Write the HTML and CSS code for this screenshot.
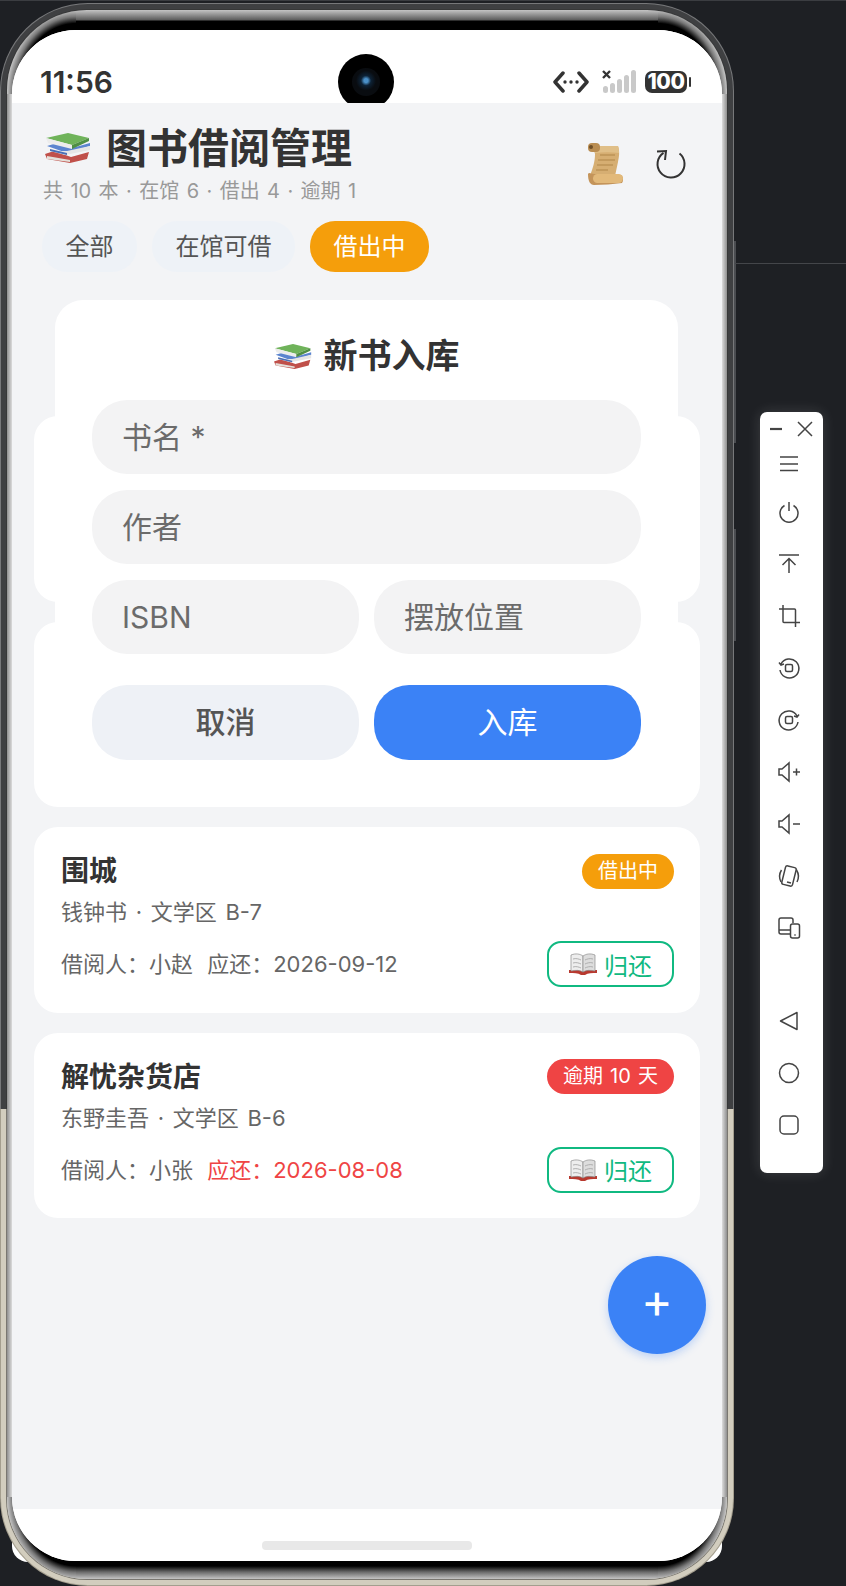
FILE: index.html
```html
<!DOCTYPE html>
<html lang="zh-CN">
<head>
    <meta charset="UTF-8">
    <meta name="viewport" content="width=device-width, initial-scale=1.0">
    <title>图书借阅管理</title>
    <link rel="stylesheet" href="styles.css">
</head>
<body>
    <svg class="defs" width="0" height="0">
        <symbol id="books" viewBox="0 0 46 30">
            <polygon points="0,21 9,18 26,24 44,19 42,26 25,30 2,26" fill="#c0504a"/>
            <polygon points="2,23 25,27 25,29 2,26" fill="#e4e0da"/>
            <polygon points="2,13 12,10 27,15 45,10 45,13 22,20" fill="#5b84cf"/>
            <polygon points="22,18 45,13 45,17 20,22 5,18" fill="#e6e6e6"/>
            <polygon points="5,16 22,20 22,22 5,18" fill="#4a6fb5"/>
            <polygon points="1,5 23,0 44,5 27,12" fill="#6fb35a"/>
            <polygon points="1,5 27,12 27,16 3,10" fill="#ececec"/>
            <polygon points="27,12 44,5 44,8 27,16" fill="#4f8f44"/>
        </symbol>
        <symbol id="open-book" viewBox="0 0 28 22">
            <path d="M0 17h28v3c-5 0-9 0-12 2h-4c-3-2-7-2-12-2z" fill="#b8392f"/>
            <path d="M2 2c5-2 9-1 12 1v16c-3-2-7-2-12-1z" fill="#eeeeee" stroke="#8a8a8a" stroke-width=".7"/>
            <path d="M26 2c-5-2-9-1-12 1v16c3-2 7-2 12-1z" fill="#dddddd" stroke="#8a8a8a" stroke-width=".7"/>
            <path d="M4 6c3-1 6 0 8 1M4 10c3-1 6 0 8 1M4 14c3-1 6 0 8 1M24 6c-3-1-6 0-8 1M24 10c-3-1-6 0-8 1M24 14c-3-1-6 0-8 1" fill="none" stroke="#a8a8a8" stroke-width=".9"/>
        </symbol>
    </svg>

    <div class="phone">
        <div class="phone-band">
            <div class="bezel">
                <div class="screen">
                    <div class="status-bar">
                        <span class="time">11:56</span>
                        <div class="camera"><span class="lens"></span></div>
                        <div class="status-icons">
                            <svg class="net-icon" width="36" height="22" viewBox="0 0 36 22">
                                <path d="M10 2 2 11l8 9M26 2l8 9-8 9" fill="none" stroke="#333" stroke-width="3.500" stroke-linecap="round" stroke-linejoin="round"/>
                                <circle cx="12" cy="11" r="1.700" fill="#333"/>
                                <circle cx="18" cy="11" r="1.700" fill="#333"/>
                                <circle cx="24" cy="11" r="1.700" fill="#333"/>
                            </svg>
                            <svg class="signal-icon" width="34" height="24" viewBox="0 0 34 24">
                                <path d="M1 2l7 7M8 2 1 9" stroke="#333" stroke-width="2.400"/>
                                <rect x="1" y="17" width="5" height="7" rx="2.500" fill="#c9c9c9"/>
                                <rect x="8" y="14" width="5" height="10" rx="2.500" fill="#c9c9c9"/>
                                <rect x="15" y="10" width="5" height="14" rx="2.500" fill="#c9c9c9"/>
                                <rect x="22" y="6" width="5" height="18" rx="2.500" fill="#c9c9c9"/>
                                <rect x="29" y="1" width="5" height="23" rx="2.500" fill="#c9c9c9"/>
                            </svg>
                            <span class="battery">100</span>
                        </div>
                    </div>

                    <div class="app">
                        <div class="header">
                            <div>
                                <h1 class="title">
                                    <svg class="title-emoji"><use href="#books"/></svg>
                                    图书借阅管理
                                </h1>
                                <div class="subtitle">共 10 本 · 在馆 6 · 借出 4 · 逾期 1</div>
                            </div>
                            <div class="header-actions">
                                <svg width="36" height="43" viewBox="0 0 36 43">
                                    <path d="M6 3h25c2 6 1 11 0 16l-3 14H3c3-9 5-14 5-22z" fill="#d6ae72"/>
                                    <path d="M6 3h25c1 3 1 5 1 7-8-1-16-1-24 0z" fill="#e0bf88"/>
                                    <path d="M13 12h15M11 17h17M10 22h16M9 27h12" stroke="#b08548" stroke-width="1.200"/>
                                    <rect x="1" y="0" width="12" height="9" rx="4" fill="#b98d52"/>
                                    <circle cx="4" cy="4" r="2" fill="#6f4f28"/>
                                    <path d="M1 31c0 7 2 11 6 11 9 0 19-1 28-2 2-3 1-7-1-8-10-1-19-1-27-1-3 0-5-2-6 0z" fill="#c4945a"/>
                                    <rect x="6" y="31" width="30" height="9" rx="4.500" fill="#e2b97a"/>
                                </svg>
                                <svg width="32" height="32" viewBox="0 0 32 32">
                                    <path d="M24.500 4.500A13.500 13.500 0 1 1 8.500 3.800" fill="none" stroke="#333" stroke-width="2"/>
                                    <path d="M2 2.500 11 2l-1 9" fill="none" stroke="#333" stroke-width="2"/>
                                </svg>
                            </div>
                        </div>

                        <div class="chips">
                            <span class="chip">全部</span>
                            <span class="chip">在馆可借</span>
                            <span class="chip chip-active">借出中</span>
                        </div>

                        <div class="book-list">
                            <div class="book-card"></div>
                            <div class="book-card"></div>
                            <div class="book-card">
                                <div class="book-top">
                                    <span class="book-name">围城</span>
                                    <span class="badge badge-out">借出中</span>
                                </div>
                                <div class="book-meta">钱钟书 · 文学区 B-7</div>
                                <div class="book-bottom">
                                    <span class="borrow-info">借阅人：小赵 <span class="due">应还：2026-09-12</span></span>
                                    <button class="return-btn"><svg class="return-emoji"><use href="#open-book"/></svg>归还</button>
                                </div>
                            </div>
                            <div class="book-card">
                                <div class="book-top">
                                    <span class="book-name">解忧杂货店</span>
                                    <span class="badge badge-late">逾期 10 天</span>
                                </div>
                                <div class="book-meta">东野圭吾 · 文学区 B-6</div>
                                <div class="book-bottom">
                                    <span class="borrow-info">借阅人：小张 <span class="due due-late">应还：2026-08-08</span></span>
                                    <button class="return-btn"><svg class="return-emoji"><use href="#open-book"/></svg>归还</button>
                                </div>
                            </div>
                        </div>

                        <div class="dialog">
                            <h2 class="dialog-title"><svg class="dialog-emoji"><use href="#books"/></svg>新书入库</h2>
                            <div class="form">
                                <input class="field" placeholder="书名 *">
                                <input class="field" placeholder="作者">
                                <div class="form-row">
                                    <input class="field" placeholder="ISBN">
                                    <input class="field" placeholder="摆放位置">
                                </div>
                            </div>
                            <div class="form-row dialog-actions">
                                <button class="btn btn-cancel">取消</button>
                                <button class="btn btn-save">入库</button>
                            </div>
                        </div>

                        <button class="fab">+</button>
                    </div>

                    <div class="nav-bar"><span class="home-bar"></span></div>
                </div>
            </div>
        </div>
        <span class="side-key side-key-long"></span>
        <span class="side-key side-key-short"></span>
    </div>

    <div class="toolbar">
        <div class="tool-head">
            <svg class="tool-icon" viewBox="0 0 24 24"><path d="M6 12h12" stroke-width="2.200"/></svg>
            <svg class="tool-icon" viewBox="0 0 24 24"><path d="M5 5l14 14M19 5 5 19"/></svg>
        </div>
        <div class="tool-item tool-menu">
            <svg class="tool-icon" viewBox="0 0 24 24"><path d="M3 5h18M3 12h18M3 18.500h18"/></svg>
        </div>
        <div class="tool-item">
            <svg class="tool-icon" viewBox="0 0 24 24"><path d="M7.500 5.500a9 9 0 1 0 9 0M12 2v9"/></svg>
        </div>
        <div class="tool-item">
            <svg class="tool-icon" viewBox="0 0 24 24"><path d="M2 3h20M12 21V7M5.500 13 12 6.500l6.500 6.500"/></svg>
        </div>
        <div class="tool-item">
            <svg class="tool-icon" viewBox="0 0 24 24"><path d="M2 5h15.500a1 1 0 0 1 1 1v17M6 1v16.500a1 1 0 0 0 1 1h16"/></svg>
        </div>
        <div class="tool-item">
            <svg class="tool-icon" viewBox="0 0 24 24"><path d="M4 8a9.500 9.500 0 1 1-1 6M2 6.500 4 9l3-1"/><rect x="8.500" y="8.500" width="7" height="7" rx="1.500"/></svg>
        </div>
        <div class="tool-item">
            <svg class="tool-icon" viewBox="0 0 24 24"><path d="M20 8a9.500 9.500 0 1 0 1 6M22 6.500 20 9l-3-1"/><rect x="8.500" y="8.500" width="7" height="7" rx="1.500"/></svg>
        </div>
        <div class="tool-item">
            <svg class="tool-icon" viewBox="0 0 24 24"><path d="M2 9h3l7-6v18l-7-6H2zM16 12h7M19.500 8.500v7"/></svg>
        </div>
        <div class="tool-item">
            <svg class="tool-icon" viewBox="0 0 24 24"><path d="M2 9h3l7-6v18l-7-6H2zM16 12h7"/></svg>
        </div>
        <div class="tool-item">
            <svg class="tool-icon" viewBox="0 0 24 24"><rect x="6.500" y="2.500" width="11" height="19" rx="2" transform="rotate(14 12 12)"/><path d="M4.500 6C2 10 2 14 4 18M19.500 6c2.500 4 2.500 8 .5 12M10 18l4 1"/></svg>
        </div>
        <div class="tool-item">
            <svg class="tool-icon" viewBox="0 0 24 24"><path d="M13 18H4a2 2 0 0 1-2-2V4a2 2 0 0 1 2-2h10a2 2 0 0 1 2 2v3M2 14h11"/><rect x="13.500" y="8" width="9" height="14" rx="2"/><path d="M17.500 19h1" stroke-width="2"/></svg>
        </div>
        <div class="tool-item tool-nav-first">
            <svg class="tool-icon" viewBox="0 0 24 24"><path d="M20 3.500v17L3.500 12z" stroke-linejoin="round"/></svg>
        </div>
        <div class="tool-item">
            <svg class="tool-icon" viewBox="0 0 24 24"><circle cx="12" cy="12" r="9.500"/></svg>
        </div>
        <div class="tool-item">
            <svg class="tool-icon" viewBox="0 0 24 24"><rect x="3" y="3" width="18" height="18" rx="4"/></svg>
        </div>
    </div>
</body>
</html>
```

FILE: styles.css
```css
* {
    box-sizing: border-box;
}

body {
    margin: 0;
    height: 1586px;
    overflow: hidden;
    display: flex;
    align-items: flex-start;
    background: #1e2024;
    border-top: 1px solid #3b3d41;
    font-family: Inter, "Noto Sans CJK SC", sans-serif;
    color: #333;
}

/* desktop divider to the right of the device */
body::after {
    content: "";
    position: absolute;
    left: 735px;
    right: 0;
    top: 263px;
    height: 1px;
    background: #44464a;
}

.defs {
    position: absolute;
}

/* device frame */
.phone {
    position: relative;
    flex: none;
    width: 734px;
    height: 1583px;
    margin-top: 2px;
    padding: 1px;
    border-radius: 88px;
    background: linear-gradient(#77787a 0 1106px, #a49e8e 1106px);
}

/* white sliver that peeks out behind the bottom corners */
.phone::before {
    content: "";
    position: absolute;
    z-index: -1;
    left: 12px;
    right: 12px;
    bottom: 24px;
    height: 200px;
    border-radius: 16px;
    background: #fff;
}

.phone-band {
    height: 100%;
    padding: 6px;
    border-radius: 87px;
    background: linear-gradient(#3f4042 0 1105px, #d2cdbe 1105px);
}

.bezel {
    height: 100%;
    padding: 20px 5px 18px;
    border-radius: 80px;
    box-shadow: 0 0 0 1px rgba(50, 50, 50, 0.55);
    background:
        radial-gradient(ellipse 69px 84px at 100% 100%, #000 84%, #777 92%, #c4c4c4 100%) left top / 69px 84px no-repeat,
        radial-gradient(ellipse 69px 84px at 0 100%, #000 84%, #777 92%, #c4c4c4 100%) right top / 69px 84px no-repeat,
        radial-gradient(ellipse 69px 82px at 100% 0, #000 84%, #777 92%, #c4c4c4 100%) left bottom / 69px 82px no-repeat,
        radial-gradient(ellipse 69px 82px at 0 0, #000 84%, #777 92%, #c4c4c4 100%) right bottom / 69px 82px no-repeat,
        linear-gradient(#c4c4c4, #5c5c5c 10px, #000 11px) top / 100% 20px no-repeat,
        linear-gradient(#000 5px, #6a6a6a 11px, #c4c4c4) bottom / 100% 18px no-repeat,
        linear-gradient(90deg, #8f8f8f, #dcdcdc 5px, #dcdcdc calc(100% - 5px), #8f8f8f);
}

.screen {
    position: relative;
    height: 100%;
    display: flex;
    flex-direction: column;
    overflow: hidden;
    border-radius: 64px;
    background: #fff;
}

.side-key {
    position: absolute;
    left: 734px;
    width: 2px;
    background: #4a4c50;
}

.side-key-long {
    top: 238px;
    height: 202px;
}

.side-key-short {
    top: 526px;
    height: 112px;
}

/* status bar */
.status-bar {
    flex: none;
    height: 73px;
    padding: 34px 31px 0 28px;
    display: flex;
    justify-content: space-between;
    align-items: flex-start;
    background: #fff;
}

.time {
    font-size: 30px;
    font-weight: 600;
    line-height: 36px;
}

.camera {
    position: absolute;
    left: 326px;
    top: 24px;
    width: 56px;
    height: 56px;
    border-radius: 50%;
    background: #000;
    display: flex;
    align-items: center;
    justify-content: center;
}

.lens {
    width: 28px;
    height: 28px;
    border-radius: 50%;
    background: radial-gradient(circle at 50% 45%, #4a90c8 0 2px, #0d2236 5px, #090c10 10px);
}

.status-icons {
    display: flex;
    align-items: flex-end;
    height: 24px;
    margin-top: 5px;
}

.net-icon {
    margin-right: 13px;
}

.signal-icon {
    margin-right: 9px;
}

.battery {
    position: relative;
    width: 42px;
    height: 22px;
    margin-right: 4px;
    border-radius: 7px;
    background: #333;
    color: #fff;
    font-size: 21px;
    font-weight: 800;
    line-height: 22px;
    letter-spacing: -0.5px;
    text-align: center;
}

.battery::after {
    content: "";
    position: absolute;
    right: -4px;
    top: 6px;
    width: 2px;
    height: 10px;
    border-radius: 1px;
    background: #333;
}

/* app */
.app {
    position: relative;
    flex: 1;
    background: #f3f4f6;
}

.header {
    display: flex;
    justify-content: space-between;
    align-items: center;
    padding: 21px 35px 0 31px;
}

.title {
    margin: 0;
    display: flex;
    align-items: center;
    font-size: 41px;
    line-height: 48px;
    font-weight: 700;
    color: #333;
}

.title-emoji {
    width: 46px;
    height: 30px;
    margin: 0 15px 0 2px;
}

.subtitle {
    margin-top: 6px;
    font-size: 20px;
    line-height: 26px;
    word-spacing: 1.800px;
    color: #999;
}

.header-actions {
    display: flex;
    align-items: center;
    gap: 32px;
    margin-top: 1px;
}

.chips {
    display: flex;
    gap: 15px;
    margin-top: 17px;
    padding-left: 30px;
}

.chip {
    height: 51px;
    padding: 0 23.500px;
    border-radius: 25px;
    background: #eef2f7;
    color: #555;
    font-size: 24px;
    line-height: 51px;
}

.chip-active {
    background: #f59e0b;
    color: #fff;
}

.book-list {
    display: flex;
    flex-direction: column;
    gap: 20px;
    padding: 144px 22px 0;
}

.book-card {
    min-height: 185.500px;
    padding: 26px 26px 0 27px;
    border-radius: 24px;
    background: #fff;
}

.book-top,
.book-bottom {
    display: flex;
    justify-content: space-between;
    align-items: center;
}

.book-name {
    font-size: 28px;
    line-height: 36px;
    font-weight: 700;
}

.badge {
    height: 35px;
    padding: 0 16px;
    border-radius: 18px;
    color: #fff;
    font-size: 20px;
    line-height: 35px;
    word-spacing: 1.500px;
}

.badge-out {
    background: #f59e0b;
}

.badge-late {
    background: #ef4444;
}

.book-meta {
    margin-top: 9px;
    font-size: 22px;
    line-height: 28px;
    word-spacing: 2.500px;
    color: #666;
}

.book-bottom {
    margin-top: 15px;
}

.borrow-info {
    margin-top: -4px;
    font-size: 22px;
    color: #666;
}

.due {
    margin-left: 8px;
}

.due-late {
    color: #ef4444;
}

.return-btn {
    display: flex;
    align-items: center;
    justify-content: center;
    width: 127px;
    height: 46px;
    padding: 0;
    border: 2px solid #10b981;
    border-radius: 14px;
    background: #fff;
    color: #10b981;
    font-family: inherit;
    font-size: 24px;
}

.return-emoji {
    width: 28px;
    height: 22px;
    margin-right: 7px;
}

/* add book dialog */
.dialog {
    position: absolute;
    left: 43px;
    top: 197px;
    width: 623px;
    height: 490px;
    padding: 36px 37px 0;
    border-radius: 28px;
    background: #fff;
}

.dialog-title {
    margin: 0 0 24px;
    display: flex;
    justify-content: center;
    align-items: center;
    font-size: 34px;
    line-height: 40px;
    font-weight: 700;
}

.dialog-emoji {
    width: 38px;
    height: 25px;
    margin-right: 12px;
}

.form {
    display: flex;
    flex-direction: column;
    gap: 16px;
}

.form-row {
    display: flex;
    gap: 15px;
}

.field {
    flex: 1;
    width: 0;
    min-width: 0;
    height: 74px;
    padding: 0 30px;
    border: 0;
    border-radius: 35px;
    background: #f3f3f4;
    font-family: inherit;
    font-size: 30px;
}

.form > .field {
    flex: none;
    width: 100%;
}

.field::placeholder {
    color: #6b6b6b;
    opacity: 1;
}

.dialog-actions {
    margin-top: 31px;
}

.btn {
    flex: 1;
    height: 75px;
    padding: 0 0 5px;
    border: 0;
    border-radius: 35px;
    font-family: inherit;
    font-size: 30px;
}

.btn-cancel {
    background: #eef1f6;
    color: #555;
    font-weight: 500;
}

.btn-save {
    background: #3b82f6;
    color: #fff;
}

.fab {
    position: absolute;
    right: 16px;
    bottom: 155px;
    width: 98px;
    height: 98px;
    padding: 0 0 10px;
    border: 0;
    border-radius: 50%;
    background: #3b82f6;
    color: #fff;
    font-family: inherit;
    font-size: 48px;
    font-weight: 400;
    box-shadow: 0 3px 8px rgba(59, 130, 246, 0.3);
}

.nav-bar {
    flex: none;
    height: 52px;
    padding-top: 32px;
    display: flex;
    justify-content: center;
    background: #fff;
}

.home-bar {
    width: 210px;
    height: 9px;
    border-radius: 4px;
    background: #e8e8e8;
}

/* emulator side toolbar */
.toolbar {
    flex: none;
    width: 63px;
    height: 761px;
    margin: 411px 0 0 26px;
    border-radius: 7px;
    background: #fff;
    box-shadow: 0 0 14px rgba(255, 255, 255, 0.14);
}

.tool-head {
    display: flex;
    justify-content: space-between;
    align-items: center;
    height: 28px;
    margin-top: 2px;
    padding: 2px 6px 0 4px;
}

.tool-item {
    display: flex;
    align-items: center;
    justify-content: center;
    height: 52px;
    padding-right: 5px;
}

.tool-menu {
    height: 44px;
}

.tool-nav-first {
    margin-top: 41px;
}

.tool-icon {
    width: 24px;
    height: 24px;
    fill: none;
    stroke: #444;
    stroke-width: 1.500;
}
```
